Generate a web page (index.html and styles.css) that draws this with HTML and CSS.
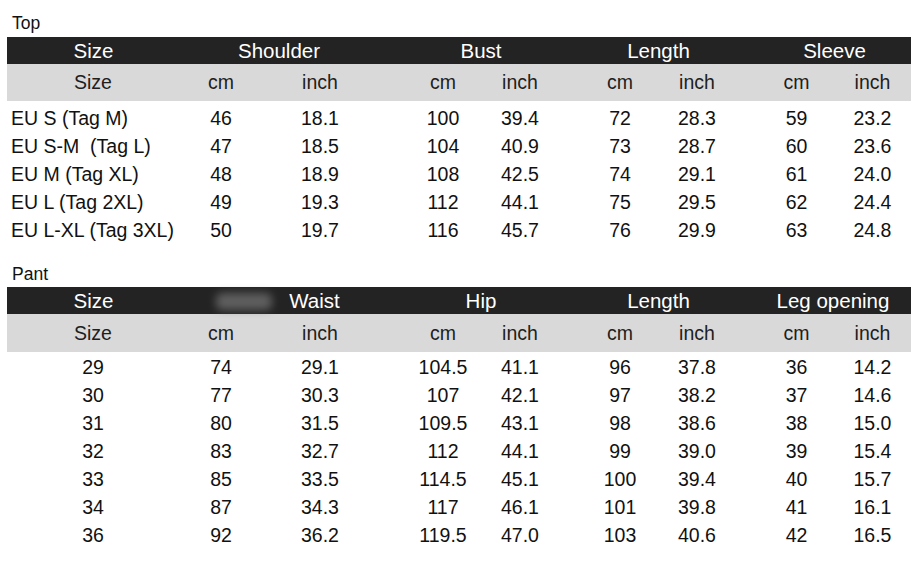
FILE: index.html
```html
<!DOCTYPE html>
<html lang="en">
<head>
<meta charset="utf-8">
<title>Size chart</title>
<link rel="stylesheet" href="styles.css">
</head>
<body>
<section class="section section--top">
  <div class="label">Top</div>
  <div class="table">
    <div class="row head">
      <div class="cell g-size">Size</div>
      <div class="cell span2 g-shoulder">Shoulder</div>
      <div class="cell span2 g-bust">Bust</div>
      <div class="cell span2 g-length">Length</div>
      <div class="cell span2 g-sleeve">Sleeve</div>
    </div>
    <div class="row cols sub">
      <div class="cell">Size</div><div class="cell">cm</div><div class="cell">inch</div><div class="cell">cm</div><div class="cell">inch</div><div class="cell">cm</div><div class="cell">inch</div><div class="cell">cm</div><div class="cell">inch</div>
    </div>
    <div class="rows">
      <div class="row cols data named"><div class="cell">EU S (Tag M)</div><div class="cell">46</div><div class="cell">18.1</div><div class="cell">100</div><div class="cell">39.4</div><div class="cell">72</div><div class="cell">28.3</div><div class="cell">59</div><div class="cell">23.2</div></div>
      <div class="row cols data named"><div class="cell">EU S-M &nbsp;(Tag L)</div><div class="cell">47</div><div class="cell">18.5</div><div class="cell">104</div><div class="cell">40.9</div><div class="cell">73</div><div class="cell">28.7</div><div class="cell">60</div><div class="cell">23.6</div></div>
      <div class="row cols data named"><div class="cell">EU M (Tag XL)</div><div class="cell">48</div><div class="cell">18.9</div><div class="cell">108</div><div class="cell">42.5</div><div class="cell">74</div><div class="cell">29.1</div><div class="cell">61</div><div class="cell">24.0</div></div>
      <div class="row cols data named"><div class="cell">EU L (Tag 2XL)</div><div class="cell">49</div><div class="cell">19.3</div><div class="cell">112</div><div class="cell">44.1</div><div class="cell">75</div><div class="cell">29.5</div><div class="cell">62</div><div class="cell">24.4</div></div>
      <div class="row cols data named"><div class="cell">EU L-XL (Tag 3XL)</div><div class="cell">50</div><div class="cell">19.7</div><div class="cell">116</div><div class="cell">45.7</div><div class="cell">76</div><div class="cell">29.9</div><div class="cell">63</div><div class="cell">24.8</div></div>
    </div>
  </div>
</section>

<section class="section section--pant">
  <div class="label">Pant</div>
  <div class="table">
    <div class="row head">
      <div class="smudge"></div>
      <div class="cell g-size">Size</div>
      <div class="cell span2 g-waist">Waist</div>
      <div class="cell span2 g-hip">Hip</div>
      <div class="cell span2 g-length">Length</div>
      <div class="cell span2 g-leg">Leg opening</div>
    </div>
    <div class="row cols sub">
      <div class="cell">Size</div><div class="cell">cm</div><div class="cell">inch</div><div class="cell">cm</div><div class="cell">inch</div><div class="cell">cm</div><div class="cell">inch</div><div class="cell">cm</div><div class="cell">inch</div>
    </div>
    <div class="rows">
      <div class="row cols data"><div class="cell">29</div><div class="cell">74</div><div class="cell">29.1</div><div class="cell">104.5</div><div class="cell">41.1</div><div class="cell">96</div><div class="cell">37.8</div><div class="cell">36</div><div class="cell">14.2</div></div>
      <div class="row cols data"><div class="cell">30</div><div class="cell">77</div><div class="cell">30.3</div><div class="cell">107</div><div class="cell">42.1</div><div class="cell">97</div><div class="cell">38.2</div><div class="cell">37</div><div class="cell">14.6</div></div>
      <div class="row cols data"><div class="cell">31</div><div class="cell">80</div><div class="cell">31.5</div><div class="cell">109.5</div><div class="cell">43.1</div><div class="cell">98</div><div class="cell">38.6</div><div class="cell">38</div><div class="cell">15.0</div></div>
      <div class="row cols data"><div class="cell">32</div><div class="cell">83</div><div class="cell">32.7</div><div class="cell">112</div><div class="cell">44.1</div><div class="cell">99</div><div class="cell">39.0</div><div class="cell">39</div><div class="cell">15.4</div></div>
      <div class="row cols data"><div class="cell">33</div><div class="cell">85</div><div class="cell">33.5</div><div class="cell">114.5</div><div class="cell">45.1</div><div class="cell">100</div><div class="cell">39.4</div><div class="cell">40</div><div class="cell">15.7</div></div>
      <div class="row cols data"><div class="cell">34</div><div class="cell">87</div><div class="cell">34.3</div><div class="cell">117</div><div class="cell">46.1</div><div class="cell">101</div><div class="cell">39.8</div><div class="cell">41</div><div class="cell">16.1</div></div>
      <div class="row cols data"><div class="cell">36</div><div class="cell">92</div><div class="cell">36.2</div><div class="cell">119.5</div><div class="cell">47.0</div><div class="cell">103</div><div class="cell">40.6</div><div class="cell">42</div><div class="cell">16.5</div></div>
    </div>
  </div>
</section>
</body>
</html>
```

FILE: styles.css
```css
* { box-sizing: border-box; }

html, body {
  margin: 0;
  background: #ffffff;
}

body {
  padding: 0 0 0 7px;
  font-family: "Liberation Sans", Arial, sans-serif;
  color: #111111;
}

.section {
  width: 904px;
}

.label {
  font-size: 17.5px;
  line-height: 20px;
  padding: 13px 0 0 5px;
  margin-bottom: 4px;
  color: #111111;
}

.section--pant .label {
  padding-top: 20px;
  margin-bottom: 3px;
}

.row {
  display: grid;
  grid-template-columns: 150px 113px 112px 99px 89px 88px 88px 88px 77px;
}

.cell {
  text-align: center;
  white-space: nowrap;
}

.span2 {
  grid-column: span 2;
}

/* dark group header */
.head {
  position: relative;
  height: 27px;
  line-height: 27px;
  background: #232323;
  color: #ffffff;
  font-size: 20.5px;
}

.g-size { padding-left: 23px; }
.g-shoulder { padding-left: 19px; }
.g-waist { padding-left: 90px; }
.g-bust, .g-hip { padding-left: 10px; }
.g-length { padding-left: 1px; }
.g-sleeve { padding-left: 12px; }
.g-leg { padding-left: 9px; }

.smudge {
  position: absolute;
  left: 209px;
  top: 6px;
  width: 56px;
  height: 17px;
  background: #737373;
  border-radius: 6px;
  filter: blur(4px);
  opacity: 0.75;
}

/* grey unit header */
.sub {
  height: 37px;
  line-height: 37px;
  background: #d9d9d9;
  color: #1e1e1e;
  font-size: 19.5px;
}

.section--pant .sub {
  height: 38px;
  line-height: 38px;
}

.rows {
  padding-top: 3px;
}

.section--pant .rows {
  padding-top: 1px;
}

.data {
  height: 28px;
  line-height: 28px;
  font-size: 19.5px;
  color: #111111;
}

/* column alignment */
.cols > .cell:nth-child(1) { padding-left: 22px; }
.cols > .cell:nth-child(2) { padding-left: 15px; }
.cols > .cell:nth-child(3) { padding-right: 12px; }
.cols > .cell:nth-child(4) { padding-left: 23px; }
.cols > .cell:nth-child(5) { padding-right: 11px; }
.cols > .cell:nth-child(6) { padding-left: 12px; }
.cols > .cell:nth-child(7) { padding-right: 10px; }
.cols > .cell:nth-child(8) { padding-left: 13px; }

.named > .cell:nth-child(1) {
  text-align: left;
  padding-left: 4px;
}
```
